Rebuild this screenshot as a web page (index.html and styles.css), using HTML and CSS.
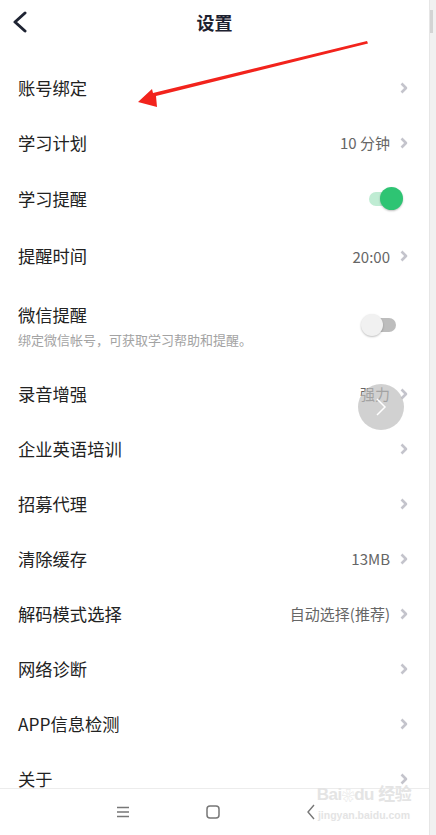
FILE: index.html
```html
<!DOCTYPE html>
<html>
<head>
    <meta charset="UTF-8">
    <title>设置</title>
    <link rel="stylesheet" href="styles.css">
</head>
<body>
    <div class="screen">
        <div class="page">
            <div class="header">
                <svg class="back" width="16" height="22" viewBox="0 0 16 22">
                    <path d="M13 2 L3 11 L13 20" fill="none" stroke="#1f2433" stroke-width="3" stroke-linecap="round" stroke-linejoin="round"/>
                </svg>
                <div class="title">设置</div>
            </div>

            <div class="list">
                <div class="row">
                    <span class="label">账号绑定</span>
                    <span class="arrow"></span>
                </div>
                <div class="row">
                    <span class="label">学习计划</span>
                    <span class="value">10 分钟</span>
                    <span class="arrow"></span>
                </div>
                <div class="row row-toggle">
                    <span class="label">学习提醒</span>
                    <span class="switch on"><i class="track"></i><i class="knob"></i></span>
                </div>
                <div class="row row-time">
                    <span class="label">提醒时间</span>
                    <span class="value">20:00</span>
                    <span class="arrow"></span>
                </div>
                <div class="row row-tall">
                    <div class="texts">
                        <span class="label">微信提醒</span>
                        <span class="sub">绑定微信帐号，可获取学习帮助和提醒。</span>
                    </div>
                    <span class="switch"><i class="track"></i><i class="knob"></i></span>
                </div>
                <div class="row">
                    <span class="label">录音增强</span>
                    <span class="value">强力</span>
                    <span class="arrow"></span>
                </div>
                <div class="row">
                    <span class="label">企业英语培训</span>
                    <span class="arrow"></span>
                </div>
                <div class="row">
                    <span class="label">招募代理</span>
                    <span class="arrow"></span>
                </div>
                <div class="row">
                    <span class="label">清除缓存</span>
                    <span class="value">13MB</span>
                    <span class="arrow"></span>
                </div>
                <div class="row">
                    <span class="label">解码模式选择</span>
                    <span class="value">自动选择(推荐)</span>
                    <span class="arrow"></span>
                </div>
                <div class="row">
                    <span class="label">网络诊断</span>
                    <span class="arrow"></span>
                </div>
                <div class="row">
                    <span class="label">APP信息检测</span>
                    <span class="arrow"></span>
                </div>
                <div class="row">
                    <span class="label">关于</span>
                    <span class="arrow"></span>
                </div>
            </div>

            <div class="navbar">
                <svg width="14" height="12" viewBox="0 0 14 12">
                    <path d="M1 1.5 H13 M1 6 H13 M1 10.5 H13" stroke="#777" stroke-width="1.3"/>
                </svg>
                <svg width="14" height="14" viewBox="0 0 14 14">
                    <rect x="1" y="1" width="12" height="12" rx="3" fill="none" stroke="#777" stroke-width="1.5"/>
                </svg>
                <svg width="10" height="16" viewBox="0 0 10 16">
                    <path d="M8 1 L2 8 L8 15" fill="none" stroke="#777" stroke-width="1.4"/>
                </svg>
            </div>

            <!-- overlays -->
            <div class="float-btn">
                <svg width="12" height="20" viewBox="0 0 12 20">
                    <path d="M2 2 L10 10 L2 18" fill="none" stroke="#fff" stroke-width="1.5"/>
                </svg>
            </div>
            <svg class="red-arrow" width="436" height="120" viewBox="0 0 436 120">
                <polygon fill="#f2231c" points="367,41 368,43.5 156,96 157,107 138,102 152,89 153,93"/>
            </svg>
            <div class="watermark">
                <div class="wm-top">Bai<span class="paw">❀</span>du 经验</div>
                <div class="wm-bottom">jingyan.baidu.com</div>
            </div>
        </div>
        <div class="scrollbar"><div class="thumb"></div></div>
    </div>
</body>
</html>
```

FILE: styles.css
```css
body {
    margin: 0;
    font-family: "Noto Sans CJK SC", "Noto Sans", sans-serif;
    background: #ffffff;
}
.screen {
    display: flex;
    width: 436px;
    height: 835px;
    overflow: hidden;
}
.page {
    position: relative;
    flex: 1;
    display: flex;
    flex-direction: column;
    background: #ffffff;
}
.scrollbar {
    width: 7px;
    background: #f1f1f1;
    border-left: 1px solid #e6e6e6;
    box-sizing: border-box;
}
.thumb {
    width: 3px;
    height: 23px;
    margin-top: 10px;
    background: #d4d4d4;
}
.header {
    position: relative;
    height: 60px;
    flex-shrink: 0;
}
.back {
    position: absolute;
    left: 12px;
    top: 11px;
}
.title {
    height: 45px;
    line-height: 45px;
    text-align: center;
    font-size: 18px;
    font-weight: bold;
    color: #1d2130;
}
.list {
    flex: 1;
    overflow: hidden;
}
.row {
    display: flex;
    align-items: center;
    height: 55px;
    padding: 0 21px 0 18px;
}
.row-toggle {
    height: 58px;
}
.row-time {
    height: 56px;
}
.row-tall {
    height: 82px;
}
.texts {
    display: flex;
    flex-direction: column;
    gap: 8px;
    margin-top: 4px;
}
.label {
    flex: 1;
    font-size: 17.3px;
    line-height: 18px;
    color: #222222;
}
.sub {
    font-size: 13px;
    line-height: 16px;
    color: #a3a3a3;
}
.texts + .switch {
    margin-left: auto;
}
.value {
    font-size: 15px;
    color: #666666;
    margin-right: 10px;
}
.arrow {
    width: 8px;
    height: 12px;
    background: url("data:image/svg+xml,%3Csvg xmlns='http://www.w3.org/2000/svg' width='8' height='12'%3E%3Cpath d='M1.5 1.5 L6 6 L1.5 10.5' fill='none' stroke='%23c4c4cc' stroke-width='2.6' stroke-linejoin='round'/%3E%3C/svg%3E") no-repeat;
}
.switch {
    position: relative;
    width: 42px;
    height: 24px;
    margin-right: 5px;
}
.switch .track {
    position: absolute;
    left: 2px;
    right: 7px;
    top: 5px;
    height: 14px;
    border-radius: 7px;
    background: #bdbdbd;
}
.switch .knob {
    position: absolute;
    left: 0;
    top: 1px;
    width: 22px;
    height: 22px;
    border-radius: 50%;
    background: #f1f1f1;
    box-shadow: 0 1px 2px rgba(0,0,0,0.25);
}
.switch.on .track {
    left: 8px;
    right: 1px;
    background: #bfecd3;
}
.switch.on .knob {
    left: auto;
    right: 0;
    width: 23px;
    height: 23px;
    top: 0;
    background: #2ec473;
}
.navbar {
    height: 47px;
    flex-shrink: 0;
    border-top: 1px solid #ececec;
    box-sizing: border-box;
    display: flex;
    align-items: center;
    padding-left: 116px;
    gap: 76px;
}
.navbar svg:last-child {
    margin-left: 10px;
}
.float-btn {
    position: absolute;
    left: 358px;
    top: 384px;
    width: 46px;
    height: 46px;
    border-radius: 50%;
    background: rgba(190,190,190,0.7);
    display: flex;
    align-items: center;
    justify-content: center;
}
.red-arrow {
    position: absolute;
    left: 0;
    top: 0;
}
.watermark {
    position: absolute;
    left: 316px;
    top: 783px;
    width: 96px;
    white-space: nowrap;
    text-align: center;
    color: #e4e4e4;
    font-family: "Liberation Sans", "Noto Sans CJK SC", sans-serif;
}
.wm-top {
    font-size: 17px;
    font-weight: bold;
    line-height: 24px;
    letter-spacing: -0.5px;
}
.paw {
    font-size: 13px;
}
.wm-bottom {
    font-size: 10.5px;
    line-height: 14px;
    font-weight: bold;
}
```
